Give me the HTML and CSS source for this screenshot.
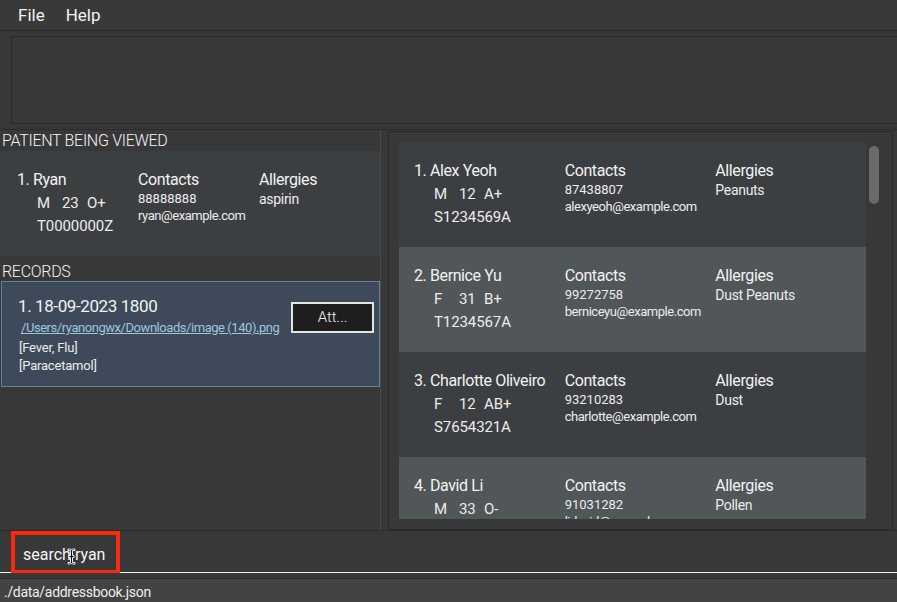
FILE: index.html
```html
<!DOCTYPE html>
<html>
<head>
<meta charset="utf-8">
<link rel="stylesheet" href="styles.css">
</head>
<body>
<div class="app">
  <div class="menubar">
    <span class="menu-item">File</span>
    <span class="menu-item">Help</span>
  </div>
  <div class="result-area">
    <div class="result-box"></div>
  </div>
  <div class="main">
    <div class="left">
      <div class="section-label first">PATIENT BEING VIEWED</div>
      <div class="pcard viewed">
        <div class="col">
          <div class="head">1. Ryan</div>
          <div class="attrs"><span>M</span><span>23</span><span>O+</span></div>
          <div class="ident">T0000000Z</div>
        </div>
        <div class="col">
          <div class="head">Contacts</div>
          <div class="phone">88888888</div>
          <div class="email">ryan@example.com</div>
        </div>
        <div class="col">
          <div class="head">Allergies</div>
          <div class="allergy">aspirin</div>
        </div>
      </div>
      <div class="section-label records">RECORDS</div>
      <div class="record">
        <div class="record-info">
          <div class="record-title">1. 18-09-2023 1800</div>
          <div class="record-link">/Users/ryanongwx/Downloads/image (140).png</div>
          <div class="record-line">[Fever, Flu]</div>
          <div class="record-line">[Paracetamol]</div>
        </div>
        <div class="att-btn">Att...</div>
      </div>
    </div>
    <div class="listview">
      <div class="list-cards">
        <div class="pcard">
          <div class="col">
            <div class="head">1. Alex Yeoh</div>
            <div class="attrs"><span>M</span><span>12</span><span>A+</span></div>
            <div class="ident">S1234569A</div>
          </div>
          <div class="col">
            <div class="head">Contacts</div>
            <div class="phone">87438807</div>
            <div class="email">alexyeoh@example.com</div>
          </div>
          <div class="col">
            <div class="head">Allergies</div>
            <div class="allergy">Peanuts</div>
          </div>
        </div>
        <div class="pcard alt">
          <div class="col">
            <div class="head">2. Bernice Yu</div>
            <div class="attrs"><span>F</span><span>31</span><span>B+</span></div>
            <div class="ident">T1234567A</div>
          </div>
          <div class="col">
            <div class="head">Contacts</div>
            <div class="phone">99272758</div>
            <div class="email">berniceyu@example.com</div>
          </div>
          <div class="col">
            <div class="head">Allergies</div>
            <div class="allergy">Dust Peanuts</div>
          </div>
        </div>
        <div class="pcard">
          <div class="col">
            <div class="head">3. Charlotte Oliveiro</div>
            <div class="attrs"><span>F</span><span>12</span><span>AB+</span></div>
            <div class="ident">S7654321A</div>
          </div>
          <div class="col">
            <div class="head">Contacts</div>
            <div class="phone">93210283</div>
            <div class="email">charlotte@example.com</div>
          </div>
          <div class="col">
            <div class="head">Allergies</div>
            <div class="allergy">Dust</div>
          </div>
        </div>
        <div class="pcard alt">
          <div class="col">
            <div class="head">4. David Li</div>
            <div class="attrs"><span>M</span><span>33</span><span>O-</span></div>
            <div class="ident">S9876543B</div>
          </div>
          <div class="col">
            <div class="head">Contacts</div>
            <div class="phone">91031282</div>
            <div class="email">lidavid@example.com</div>
          </div>
          <div class="col">
            <div class="head">Allergies</div>
            <div class="allergy">Pollen</div>
          </div>
        </div>
      </div>
      <div class="scroll-track"><div class="scroll-thumb"></div></div>
    </div>
  </div>
  <div class="command">
    <div class="command-field">search ryan</div>
    <div class="highlight"></div>
    <svg class="ibeam" width="9" height="17" viewBox="0 0 9 17">
      <path d="M1 1 H3.5 L4.5 2 L5.5 1 H8 V2.5 H5.5 V7.5 H7 V9.5 H5.5 V14.5 H8 V16 H5.5 L4.5 15 L3.5 16 H1 V14.5 H3.5 V9.5 H2 V7.5 H3.5 V2.5 H1 Z" fill="#111" stroke="#fff" stroke-width="0.9"/>
    </svg>
  </div>
  <div class="statusbar">./data/addressbook.json</div>
</div>
</body>
</html>
```
FILE: styles.css
```css
* { box-sizing: border-box; }
html, body { margin: 0; padding: 0; }
body {
  width: 897px;
  height: 602px;
  overflow: hidden;
  background: #383838;
  font-family: Roboto, "Liberation Sans", sans-serif;
  color: #ececec;
}
.app {
  display: flex;
  flex-direction: column;
  width: 897px;
  height: 602px;
}
.menubar {
  height: 31px;
  display: flex;
  align-items: center;
  gap: 21px;
  padding-left: 18px;
  padding-bottom: 1px;
  border-bottom: 1px solid #2a2a2a;
  background: #393939;
  font-size: 17px;
  color: #f2f2f2;
}
.result-area {
  height: 99px;
  padding: 5px 0 0 11px;
  border-bottom: 1px solid #2a2a2a;
}
.result-box {
  height: 88px;
  margin-right: -4px;
  border: 1px solid #2b2b2b;
  background: #383838;
}
.main {
  height: 401px;
  display: flex;
  border-bottom: 1px solid #2a2a2a;
}
.left {
  width: 381px;
  border-right: 1px solid #4a4a4a;
  display: flex;
  flex-direction: column;
}
.section-label {
  font-size: 16px;
  font-weight: 300;
  letter-spacing: -0.3px;
  padding-left: 2px;
  color: #f4f4f4;
}
.section-label.first {
  height: 21px;
  padding-top: 1px;
  line-height: 20px;
}
.section-label.records {
  height: 25px;
  padding-top: 6px;
  line-height: 19px;
}
.pcard {
  height: 105px;
  flex: none;
  background: #3c3f41;
  display: grid;
  grid-template-columns: repeat(3, 1fr);
  padding: 18px 0 0 15px;
}
.pcard.alt { background: #515658; }
.pcard.viewed {
  width: 380px;
  padding-left: 17px;
}
.col {
  display: flex;
  flex-direction: column;
  white-space: nowrap;
}
.head {
  font-size: 16px;
  line-height: 22px;
  letter-spacing: -0.4px;
  color: #f2f2f2;
}
.attrs {
  display: flex;
  padding-left: 20px;
  font-size: 15px;
  line-height: 24px;
  letter-spacing: -0.1px;
}
.attrs span { width: 25px; }
.ident {
  padding-left: 20px;
  font-size: 15px;
  line-height: 22px;
  letter-spacing: -0.1px;
}
.phone {
  font-size: 13px;
  line-height: 16px;
}
.email {
  font-size: 13px;
  line-height: 18px;
  letter-spacing: -0.45px;
}
.allergy {
  font-size: 14px;
  line-height: 16px;
  letter-spacing: -0.3px;
}
.record {
  width: 379px;
  height: 106px;
  margin-left: 1px;
  border: 1px solid #5d8497;
  background: #3e4a5a;
  display: flex;
  justify-content: space-between;
  padding: 13px 5px 0 16px;
}
.record-title {
  font-size: 17px;
  line-height: 22px;
  letter-spacing: -0.4px;
  color: #f2f2f2;
}
.record-link {
  padding-left: 3px;
  font-size: 13px;
  line-height: 22px;
  letter-spacing: -0.45px;
  color: #9dc6df;
  text-decoration: underline;
  white-space: nowrap;
}
.record-line {
  padding-left: 1px;
  font-size: 13px;
  line-height: 18px;
  letter-spacing: -0.2px;
}
.att-btn {
  width: 83px;
  height: 31px;
  margin-top: 7px;
  border: 2px solid #e4e4e4;
  background: #1e1e1e;
  font-size: 15px;
  font-weight: 300;
  line-height: 27px;
  text-align: center;
  color: #f4f4f4;
}
.listview {
  width: 505px;
  height: 399px;
  margin: 1px 0 0 7px;
  border: 1px solid #2b2b2b;
  display: flex;
  padding: 10px 0 10px 10px;
}
.list-cards {
  width: 467px;
  overflow: hidden;
  display: flex;
  flex-direction: column;
}
.scroll-track {
  padding: 4px 0 0 3px;
}
.scroll-thumb {
  width: 10px;
  height: 58px;
  border-radius: 5px;
  background: #6a6a6a;
}
.command {
  position: relative;
  height: 42px;
  display: flex;
}
.command-field {
  flex: 1;
  height: 42px;
  padding: 7px 0 0 23px;
  line-height: 34px;
  font-size: 16px;
  color: #f6f6f6;
  border-bottom: 1px solid #f4f4f4;
}
.highlight {
  position: absolute;
  left: 11px;
  top: 0;
  width: 109px;
  height: 43px;
  border: 4px solid #f8290f;
}
.ibeam {
  position: absolute;
  left: 67px;
  top: 17px;
}
.statusbar {
  height: 29px;
  border-top: 5px solid #383838;
  background: #434343;
  padding: 3px 0 0 4px;
  line-height: 23px;
  font-size: 14px;
  letter-spacing: -0.3px;
  color: #eeeeee;
  position: relative;
}
.statusbar::before {
  content: "";
  position: absolute;
  left: 0;
  right: 0;
  top: 0;
  height: 1px;
  background: #2a2a2a;
}
```
